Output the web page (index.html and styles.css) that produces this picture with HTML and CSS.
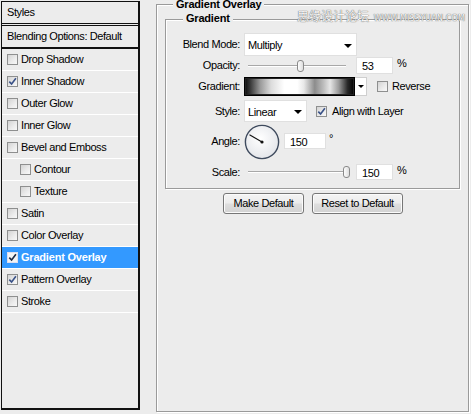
FILE: index.html
```html
<!DOCTYPE html>
<html>
<head>
<meta charset="utf-8">
<link rel="stylesheet" href="styles.css">
</head>
<body>
<div class="app">
  <aside class="styles-panel">
    <div class="sp-head">Styles</div>
    <div class="sp-blend">Blending Options: Default</div>
    <ul class="sp-list">
      <li class="item"><span class="cb"></span>Drop Shadow</li>
      <li class="item"><span class="cb"><svg viewBox="0 0 9 9"><path d="M1.3 4.6 L3.6 7.1 L7.9 1.3" /></svg></span>Inner Shadow</li>
      <li class="item"><span class="cb"></span>Outer Glow</li>
      <li class="item"><span class="cb"></span>Inner Glow</li>
      <li class="item"><span class="cb"></span>Bevel and Emboss</li>
      <li class="item sub"><span class="cb"></span>Contour</li>
      <li class="item sub"><span class="cb"></span>Texture</li>
      <li class="item"><span class="cb"></span>Satin</li>
      <li class="item"><span class="cb"></span>Color Overlay</li>
      <li class="item active"><span class="cb"><svg viewBox="0 0 9 9"><path d="M1.3 4.6 L3.6 7.1 L7.9 1.3" /></svg></span>Gradient Overlay</li>
      <li class="item"><span class="cb"><svg viewBox="0 0 9 9"><path d="M1.3 4.6 L3.6 7.1 L7.9 1.3" /></svg></span>Pattern Overlay</li>
      <li class="item"><span class="cb"></span>Stroke</li>
    </ul>
  </aside>

  <section class="group outer">
    <div class="group-title outer-title">Gradient Overlay</div>
    <div class="group inner">
      <div class="group-title inner-title">Gradient</div>

      <div class="row r-blend">
        <span class="lbl">Blend Mode:</span>
        <div class="select sel-blend"><span>Multiply</span><span class="arrow"></span></div>
      </div>

      <div class="row r-opacity">
        <span class="lbl">Opacity:</span>
        <div class="slider"><span class="track"></span><span class="thumb" style="left:53px"></span></div>
        <span class="num">53</span>
        <span class="unit">%</span>
      </div>

      <div class="row r-grad">
        <span class="lbl">Gradient:</span>
        <div class="grad"><span class="grad-bar"></span><span class="grad-drop"><span class="arrow small"></span></span></div>
        <span class="cb cb-rev"></span><span class="cb-text">Reverse</span>
      </div>

      <div class="row r-style">
        <span class="lbl">Style:</span>
        <div class="select sel-style"><span>Linear</span><span class="arrow"></span></div>
        <span class="cb cb-align"><svg viewBox="0 0 9 9"><path d="M1.3 4.6 L3.6 7.1 L7.9 1.3" /></svg></span><span class="cb-text">Align with Layer</span>
      </div>

      <div class="row r-angle">
        <span class="lbl">Angle:</span>
        <svg class="dial" viewBox="0 0 36 36" width="36" height="36">
          <defs>
            <radialGradient id="dg" cx="45%" cy="40%" r="60%">
              <stop offset="0" stop-color="#ffffff"/>
              <stop offset="1" stop-color="#e4e6ea"/>
            </radialGradient>
          </defs>
          <circle cx="18" cy="18" r="16.6" fill="url(#dg)" stroke="#3f4b5e" stroke-width="1.4"/>
          <line x1="18" y1="18" x2="5.5" y2="10.8" stroke="#111" stroke-width="1.1"/>
          <circle cx="18" cy="18" r="1.6" fill="#111"/>
        </svg>
        <span class="num num-angle">150</span>
        <span class="deg">°</span>
      </div>

      <div class="row r-scale">
        <span class="lbl">Scale:</span>
        <div class="slider"><span class="track"></span><span class="thumb" style="left:99px"></span></div>
        <span class="num">150</span>
        <span class="unit">%</span>
      </div>
    </div>

    <div class="buttons">
      <button class="btn btn-make">Make Default</button>
      <button class="btn btn-reset">Reset to Default</button>
    </div>
  </section>

  <div class="watermark">思缘设计论坛 <span class="wm-url">WWW.MISSYUAN.COM</span></div>
</div>
</body>
</html>
```

FILE: styles.css
```css
* { box-sizing: border-box; }
html, body { margin: 0; }
body {
  background: #ececec;
  font: 11px/13px "Liberation Sans", Arial, sans-serif;
  letter-spacing: -0.4px;
  color: #000;
  padding: 1px 0 0 1px;
  width: 471px;
  height: 414px;
  overflow: hidden;
}
.app {
  display: flex;
  align-items: flex-start;
  position: relative;
}

/* ---------- Styles list ---------- */
.styles-panel {
  width: 139px;
  height: 409px;
  border: solid #111;
  border-width: 1px 2px 2px 1px;
  background: #ececec;
  flex: none;
}
.sp-head {
  height: 24px;
  padding-left: 5px;
  display: flex;
  align-items: center;
  border-bottom: 3px double #111;
}
.sp-blend {
  height: 23px;
  padding-left: 5px;
  display: flex;
  align-items: center;
  border-bottom: 2px solid #111;
}
.sp-list { list-style: none; margin: 0; padding: 0; }
.item {
  height: 22px;
  border-bottom: 1px solid #fff;
  display: flex;
  align-items: center;
  padding-left: 5px;
  gap: 3px;
}
.item.sub { padding-left: 18px; }
.item.active {
  background: #3399ff;
  color: #fff;
  font-weight: bold;
  letter-spacing: -0.2px;
}

.cb {
  width: 11px;
  height: 11px;
  flex: none;
  border: 1px solid #8e8f8f;
  background: linear-gradient(135deg, #d3d3d3 0%, #ececec 60%, #f8f8f8 100%);
  display: inline-flex;
  align-items: center;
  justify-content: center;
}
.cb svg { width: 9px; height: 9px; }
.cb path { fill: none; stroke: #3a5288; stroke-width: 1.6; }
.item.active .cb { background: #f4f4f4; border-color: #dde; }
.item.active .cb path { stroke: #1d2a44; }

/* ---------- Group boxes ---------- */
.group {
  border: 1px solid #9a9a9a;
  box-shadow: inset 1px 1px 0 #fff, 1px 1px 0 #fff;
}
.outer {
  margin: 3px 0 0 16px;
  width: 313px;
  height: 408px;
  padding: 0 8px;
  flex: none;
}
.group-title {
  width: max-content;
  background: #ececec;
  padding: 0 3px;
  font-weight: bold;
  line-height: 13px;
  letter-spacing: -0.2px;
}
.outer-title { margin: -7px 0 0 8px; }
.inner {
  margin-top: 8px;
  padding-bottom: 8px;
}
.inner-title { margin: -8px 0 0 17px; }

.row {
  display: flex;
  align-items: center;
}
.lbl {
  width: 74px;
  margin-right: 4px;
  text-align: right;
  flex: none;
}
.r-blend { margin-top: 8px; height: 23px; }
.r-opacity { margin-top: 1px; height: 17px; }
.r-grad { margin-top: 3px; height: 19px; }
.r-style { margin-top: 4px; height: 22px; }
.r-angle { margin-top: 0; height: 38px; }
.r-scale { margin-top: 4px; height: 16px; }

.select {
  height: 100%;
  background: #fff;
  border: 1px solid #e0e0e0;
  display: flex;
  align-items: center;
  justify-content: space-between;
  padding: 2px 4px 0 3px;
}
.sel-blend { width: 113px; }
.sel-style { width: 63px; }
.arrow {
  width: 0;
  height: 0;
  border-left: 4px solid transparent;
  border-right: 4px solid transparent;
  border-top: 4px solid #000;
}
.arrow.small {
  border-left-width: 3px;
  border-right-width: 3px;
  border-top-width: 3px;
}

.slider {
  width: 108px;
  height: 100%;
  position: relative;
  flex: none;
}
.track {
  position: absolute;
  left: 4px;
  right: 6px;
  top: 50%;
  margin-top: -1px;
  height: 2px;
  border-top: 1px solid #a8a8a8;
  border-bottom: 1px solid #fff;
}
.thumb {
  position: absolute;
  top: 50%;
  margin-top: -6px;
  width: 7px;
  height: 12px;
  border: 1px solid #8a8a8a;
  border-radius: 3px;
  background: linear-gradient(90deg, #fdfdfd, #dedede);
}
.num {
  width: 37px;
  height: 17px;
  margin-left: 4px;
  background: #fff;
  border: 1px solid #e0e0e0;
  padding: 2px 0 0 5px;
  display: flex;
  align-items: center;
  flex: none;
}
.r-scale .num { height: 16px; }
.unit { margin-left: 4px; margin-bottom: 4px; }

.grad { display: flex; height: 100%; }
.grad-bar {
  width: 111px;
  border: 1px solid #000;
  box-shadow: inset 0 0 0 1px #222;
  background: linear-gradient(90deg, #0c0c0c 0%, #3a3a3a 5%, #9a9a9a 14%, #dcdcdc 24%, #ffffff 36%, #ffffff 48%, #e8e8e8 54%, #8c8c8c 64%, #bdbdbd 72%, #e6e6e6 78%, #9a9a9a 86%, #2a2a2a 94%, #000 100%);
}
.grad-drop {
  width: 12px;
  background: #fff;
  border: 1px solid #cfcfcf;
  border-left: none;
  display: flex;
  align-items: center;
  justify-content: center;
}
.cb-rev { margin-left: 10px; }
.cb-align { margin-left: 9px; }
.cb-text { margin-left: 4px; }
.r-style .cb-text { margin-left: 5px; }

.dial { flex: none; margin-top: 1px; }
.num-angle { width: 42px; height: 16px; }
.deg { margin-left: 3px; margin-bottom: 6px; }

/* ---------- Buttons ---------- */
.buttons {
  margin-top: 4px;
  display: flex;
  justify-content: center;
  gap: 8px;
  padding-left: 1px;
}
.btn {
  height: 21px;
  border: 1px solid #767676;
  border-radius: 3px;
  background: linear-gradient(#f4f4f4 0%, #ececec 48%, #dedede 52%, #d2d2d2 100%);
  box-shadow: inset 0 0 0 1px #fbfbfb;
  font: inherit;
  letter-spacing: inherit;
  color: #000;
  padding: 0;
  display: flex;
  align-items: center;
  justify-content: center;
}
.btn-make { width: 81px; }
.btn-reset { width: 91px; }

/* ---------- Watermark (overlay) ---------- */
.watermark {
  position: absolute;
  left: 296px;
  top: 8px;
  font: 12px/14px "Noto Sans CJK SC", sans-serif;
  letter-spacing: 0;
  color: #f7f7f7;
  text-shadow: 0 0 1px #6a6a6a, 0 0 1px #6a6a6a;
  white-space: nowrap;
}
.wm-url {
  font: 8px/10px "DejaVu Sans", sans-serif;
  letter-spacing: 0.2px;
  margin-left: 2px;
}
```
